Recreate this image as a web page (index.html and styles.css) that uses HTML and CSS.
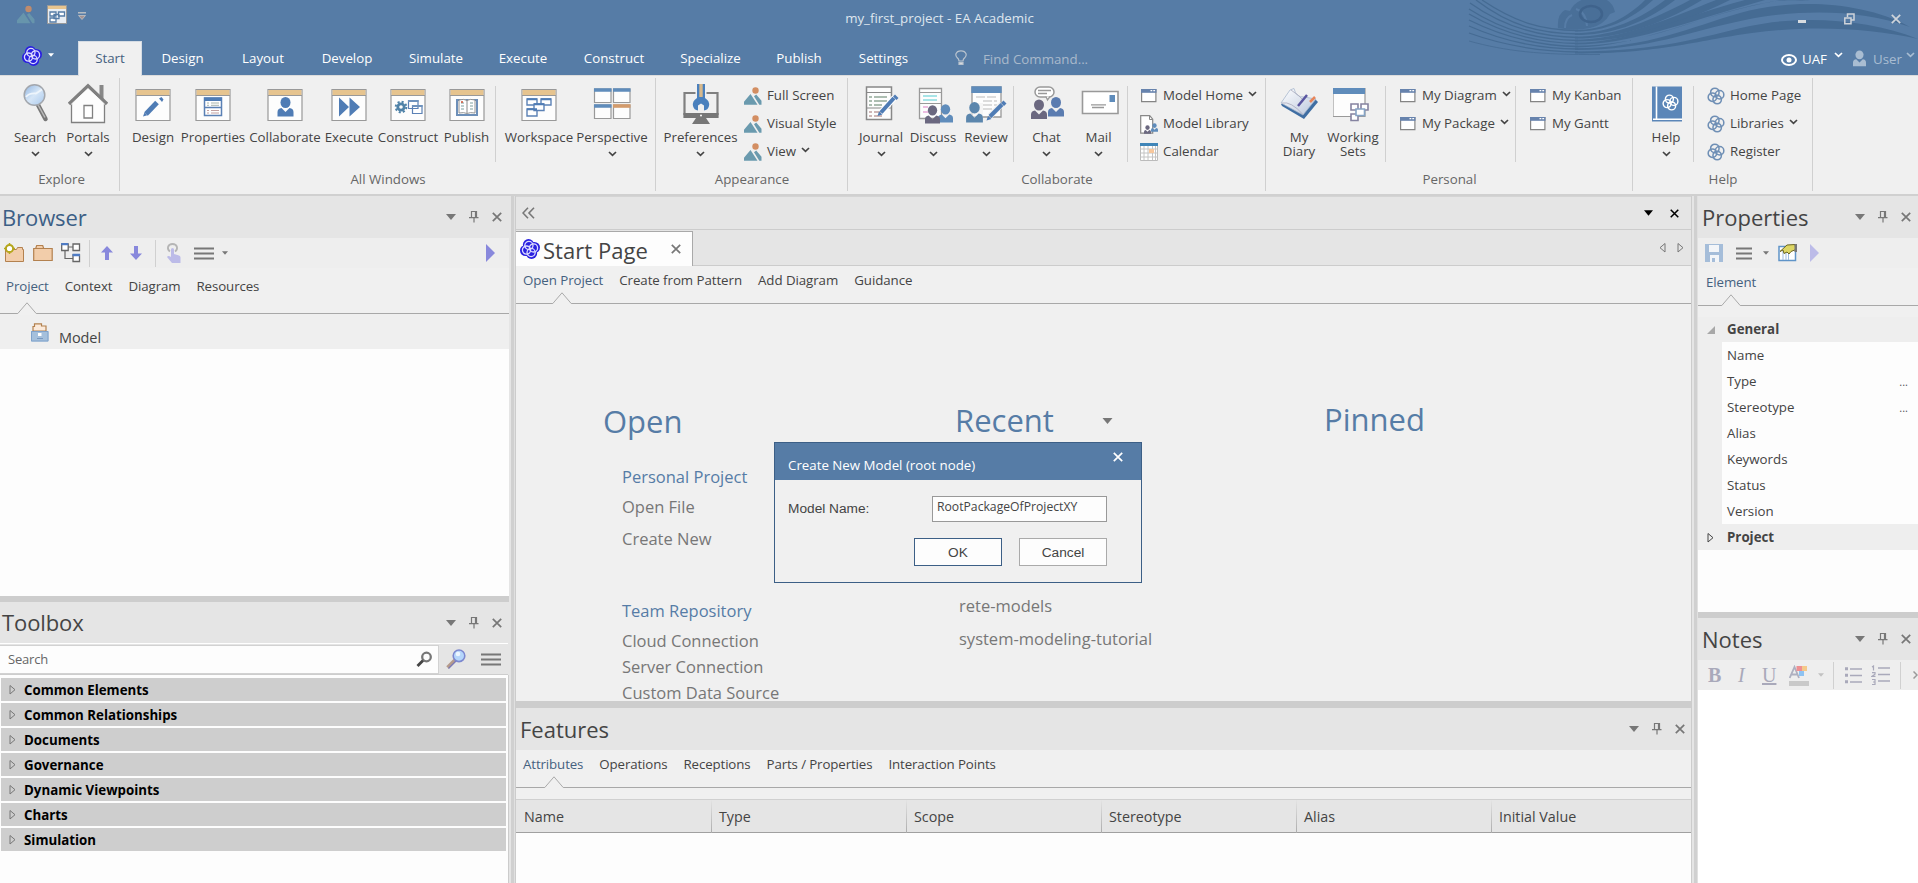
FILE: index.html
```html
<!DOCTYPE html>
<html lang="en">
<head>
<meta charset="utf-8">
<title>my_first_project - EA Academic</title>
<link rel="stylesheet" href="styles.css">
</head>
<body>
<svg class="defs" width="0" height="0">
  <defs>
    <linearGradient id="glass" x1="0" y1="0" x2="1" y2="1"><stop offset="0" stop-color="#8fb4e0"/><stop offset=".5" stop-color="#d6e6f7"/><stop offset="1" stop-color="#a8c8ec"/></linearGradient>
    <linearGradient id="page" x1="0" y1="0" x2="1" y2="1"><stop offset="0" stop-color="#ffffff"/><stop offset="1" stop-color="#b9c6dc"/></linearGradient>
  </defs>
  <symbol id="chev" viewBox="0 0 9 6"><path d="M1 1l3.5 3.3L8 1" fill="none" stroke="currentColor" stroke-width="1.7"/></symbol>
  <symbol id="down" viewBox="0 0 10 6"><path d="M0 0h10L5 6z" fill="currentColor"/></symbol>
  <symbol id="pin" viewBox="0 0 10 12"><path d="M2.5 .5h5v6h-5zM6.5 1v5M0 6.7h9.5M5 7v4.500" fill="none" stroke="currentColor" stroke-width="1.2"/></symbol>
  <symbol id="cross" viewBox="0 0 10 10"><path d="M.8.8l8.400 8.400M9.200.8L.8 9.200" fill="none" stroke="currentColor" stroke-width="1.700"/></symbol>
  <symbol id="knot" viewBox="0 0 20 20"><g fill="none" stroke="currentColor" stroke-width="1.700"><circle cx="8.700" cy="6" r="4.700"/><circle cx="14" cy="8.700" r="4.700"/><circle cx="11.300" cy="14" r="4.700"/><circle cx="6" cy="11.300" r="4.700"/></g></symbol>
  <symbol id="logo" viewBox="0 0 20 20"><g fill="#2a20e0"><circle cx="8.500" cy="5.600" r="5.600"/><circle cx="14.400" cy="8.500" r="5.600"/><circle cx="11.500" cy="14.400" r="5.600"/><circle cx="5.600" cy="11.500" r="5.600"/></g><g fill="none" stroke="#dcdcff" stroke-width="1.300"><circle cx="8.900" cy="6.500" r="4.100"/><circle cx="13.500" cy="8.900" r="4.100"/><circle cx="11.100" cy="13.500" r="4.100"/><circle cx="6.500" cy="11.100" r="4.100"/></g></symbol>
  <symbol id="win" viewBox="0 0 40 40"><path d="M3 6.500h34v31H3z" fill="#fdfdfd" stroke="#999" stroke-width="1.200"/><path d="M3.600 7h32.800v5H3.600z" fill="#e6c48f"/><path d="M3 12.500h34" stroke="#999"/></symbol>
  <symbol id="pic" viewBox="0 0 18 18"><circle cx="11.500" cy="3.500" r="3.200" fill="#d38e62"/><path d="M0 17.800v-3L6.500 7l7 10.800zM10 9.200l2.200-1.700 5.300 6.300v4h-2.200z" fill="#6a9aae"/></symbol>
  <symbol id="small" viewBox="0 0 18 18"><path d="M1.600 2.600h14.300v12H1.600z" fill="#fff" stroke="#858585" stroke-width="1.200"/><path d="M1 2h15.500v3.800H1z" fill="#6783ad"/><path d="M10.500 3.600h1.800M13.300 3.600h1.800" stroke="#fff" stroke-width="1.300"/></symbol>
  <symbol id="man" viewBox="0 0 16 20"><ellipse cx="8" cy="5.500" rx="5" ry="5.500" fill="currentColor"/><path d="M0 19.500v-4.500q0-3.500 4-4l4 4 4-4q4 .5 4 4v4.500z" fill="currentColor"/></symbol>
  <symbol id="tri" viewBox="0 0 8 12"><path d="M1 1.500v8.500L6 5.700z" fill="none" stroke="currentColor"/></symbol>
  <symbol id="menu" viewBox="0 0 20 13"><path d="M0 1.500h20M0 6.500h20M0 11.500h20" stroke="#777" stroke-width="2.200"/></symbol>
  <symbol id="play" viewBox="0 0 9 18"><path d="M0 0v18L9 9z" fill="currentColor"/></symbol>
  <symbol id="notch" viewBox="0 0 20 13"><path d="M0 11.500h.5L10 .8l9.500 10.700h.5V13H0z" fill="#f0f0f0"/><path d="M0 11.500h.8L10 .8l9.200 10.700h.8" fill="none" stroke="#aaa"/></symbol>
</svg>

<header class="top">
  <svg class="waves" width="450" height="60" viewBox="1468 0 450 60">
    <g fill="none" stroke="#456b93" stroke-width="1.300">
      <path d="M1482 0C1515 22 1540 30 1578 30.500"/>
      <path d="M1476 0C1510 26 1540 33.500 1578 34"/>
      <path d="M1470 3C1505 28 1540 37 1578 37.500"/>
      <path d="M1469 9C1505 32 1540 40 1578 40.500"/>
      <path d="M1469 14C1505 35 1540 43 1578 43.500"/>
      <path d="M1469 20C1505 38 1540 46 1578 46.500"/>
      <path d="M1469 26C1505 42 1540 49 1578 49"/>
      <path d="M1469 33C1505 46 1540 51.500 1578 52"/>
      <path d="M1469 41C1505 51 1540 55 1600 54.500" stroke-width=".8"/>
    </g>
    <g fill="#456b93">
      <path d="M1575 30C1605 30 1628 17 1645 0h8C1630 21 1605 31.500 1575 31.500z"/>
      <path d="M1575 33.300C1610 33.300 1642 18 1665 0h10C1642 25 1610 35 1575 35z"/>
      <path d="M1575 36.800C1615 36.800 1656 18 1690 0h12C1656 28 1615 38.500 1575 38.500z"/>
      <path d="M1575 39.800C1620 39.800 1668 19 1716 0h14C1668 30 1620 41.500 1575 41.500z"/>
      <path d="M1575 42.800C1630 42.800 1680 17 1745 0h20C1680 24 1630 44.500 1575 44.500z"/>
      <path d="M1575 45.800C1640 45.800 1688 22 1738 9S1790 2 1810 0h-28C1700 14 1640 47.500 1575 47.500z"/>
      <path d="M1575 48.300C1650 48 1690 27 1740 13S1860 0 1910 27C1860 9 1800 9 1745 20S1650 50 1575 50z"/>
      <path d="M1575 51.500C1660 51.500 1700 37 1750 26S1870 19 1918 39C1870 28 1810 25 1752 33S1660 53.500 1575 53.500z"/>
    </g>
    <path d="M1558 28q-1-14 7-18l5 1Q1576-2 1596-3q16 1 19 15l-5 2q-6 11-20 14-16 3-32 0z" fill="#496f98"/>
    <g fill="none" stroke="#567ca6" stroke-width="2"><path d="M1565 28q0-10 7-13M1576 9q10 3 11 17"/></g>
    <ellipse cx="1591" cy="14" rx="11" ry="8" fill="none" stroke="#3f638c" stroke-width="2.500"/>
  </svg>
  <div class="titlebar">
    <div class="quick">
      <svg class="q-pic" width="18" height="19"><use href="#pic"/></svg>
      <svg class="q-win" width="21" height="20" viewBox="0 0 21 20"><path d="M.5.5h19v18H.5z" fill="#e8edf3" stroke="#999"/><path d="M1 1h18v3H1z" fill="#e6c48f"/><g fill="#fff" stroke="#567ca6" stroke-width="1.300"><path d="M3 7h6v4H3zM11.500 7h6v4h-6zM3 13h6v4H3zM7 9.500h5v4H7z"/></g></svg>
      <svg class="q-more" width="8" height="9" viewBox="0 0 8 9"><path d="M0 .8h8" stroke="#c8c8c8" stroke-width="1.300"/><path d="M.5 3.500h7L4 7.500z" fill="#a49494" stroke="#ccc" stroke-width=".7"/></svg>
    </div>
    <div class="title">my_first_project - EA Academic</div>
    <div class="winbtns">
      <svg width="8" height="3"><path d="M0 1.500h8" stroke="#d8dce0" stroke-width="3"/></svg>
      <svg width="11" height="12" viewBox="0 0 11 12" fill="none" stroke="#cfd4da" stroke-width="1.500"><path d="M3.500 4V1h6.500v6H7M.8 5h6.200v5.800H.8z"/></svg>
      <svg class="light" width="10" height="10"><use href="#cross"/></svg>
    </div>
  </div>
  <nav class="tabrow">
    <div class="appbtn"><svg width="20" height="20"><use href="#logo"/></svg><svg width="6" height="4" class="light"><use href="#down"/></svg></div>
    <span class="rtab on">Start</span><span class="rtab">Design</span><span class="rtab">Layout</span><span class="rtab">Develop</span><span class="rtab">Simulate</span><span class="rtab">Execute</span><span class="rtab">Construct</span><span class="rtab">Specialize</span><span class="rtab">Publish</span><span class="rtab">Settings</span>
    <div class="find"><svg width="12" height="16" viewBox="0 0 12 16" fill="none" stroke="#b9c3ce" stroke-width="1.200"><path d="M4 11q0-2-2-3.500-1.600-2-1-3.700Q2 .8 6 .8t5 3q.6 1.700-1 3.700Q8 9 8 11z"/><path d="M4 12.500h4v2H4z" fill="#d5d9de"/></svg><span>Find Command...</span></div>
    <div class="user">
      <svg width="16" height="12" viewBox="0 0 16 12"><ellipse cx="8" cy="6" rx="7" ry="5" fill="none" stroke="#fff" stroke-width="2"/><circle cx="8" cy="6" r="2.500" fill="#fff"/></svg>
      <span>UAF</span><svg class="up" width="9" height="6"><use href="#chev"/></svg>
      <svg class="man" width="13" height="17"><use href="#man"/></svg><span class="dim">User</span><svg class="up dim" width="9" height="6"><use href="#chev"/></svg>
    </div>
  </nav>
</header>

<section class="ribbon">
  <div class="group g-explore">
    <div class="cells">
      <div class="big"><svg width="40" height="40"><path d="M22 21l8.500 16" stroke="#777" stroke-width="4.500" stroke-linecap="round"/><path d="M22 21l8 14.500" stroke="#bbb" stroke-width="1.500"/><circle cx="19.500" cy="13" r="10.300" fill="url(#glass)" stroke="#a3a7ad" stroke-width="1.500"/><path d="M11 15q3-4 10-3.500l6-4" stroke="#eef5fc" stroke-width="1.800" fill="none"/></svg><b>Search</b><svg class="ch" width="9" height="6"><use href="#chev"/></svg></div>
      <div class="big"><svg width="40" height="42"><path d="M31.500 3h4v17l-4-4z" fill="#888"/><path d="M3.500 20v20.500h33V20L20 5z" fill="#fdfdfd" stroke="#808080" stroke-width="1.300"/><path d="M1 22L20 4l19 18" fill="none" stroke="#808080" stroke-width="3.500"/><path d="M3 22.500L20 6.500l17 16" fill="none" stroke="#fff" stroke-width=".8"/><path d="M16 23.500h8.500v12.500H16z" fill="#fff" stroke="#808080" stroke-width="1.300"/></svg><b>Portals</b><svg class="ch" width="9" height="6"><use href="#chev"/></svg></div>
    </div><div class="gname">Explore</div>
  </div>
  <div class="group g-windows">
    <div class="cells">
      <div class="big"><svg width="40" height="40"><use href="#win"/><path d="M13 32L24 20.500" stroke="#4f7cb5" stroke-width="5"/><path d="M10 34.500l1.500-4 2.800 2.700zM26 16.500l2.500-1.500 2 2.500-1.500 2.500z" fill="#4f7cb5"/></svg><b>Design</b></div>
      <div class="big"><svg width="40" height="40"><use href="#win"/><path d="M11.500 16h17v17.500h-17zM11.500 25.500h17" fill="#fff" stroke="#5b81b5" stroke-width="1.500"/><path d="M11 15.500h18v3.500H11z" fill="#4f7cb5"/><path d="M14 21h2M18 21h8M14 23.300h2M18 23.300h8" stroke="#a9b5ac"/><path d="M14 28.500h2M18 28.500h8M14 31h2M18 31h8" stroke="#c3a0a0"/></svg><b>Properties</b></div>
      <div class="big"><svg width="40" height="40"><use href="#win"/><svg x="12" y="15" width="17" height="20" color="#4f7cb5"><use href="#man"/></svg></svg><b>Collaborate</b></div>
      <div class="big"><svg width="40" height="40"><use href="#win"/><path d="M10 15.500v19L20 25zM20.500 15.500v19L31 25z" fill="#4f7cb5"/></svg><b>Execute</b></div>
      <div class="big"><svg width="40" height="40"><use href="#win"/><circle cx="13" cy="25" r="3.200" fill="none" stroke="#4f82a8" stroke-width="2.800"/><circle cx="13" cy="25" r="5.300" fill="none" stroke="#4f82a8" stroke-width="2" stroke-dasharray="2.080 2.080"/><path d="M20.500 18.500h9.500v8h-9.500zM24.500 23.500h9.500v8h-9.500z" fill="#fff" stroke="#5b81b5" stroke-width="1.200"/><path d="M20 18h10.500v2H20zM24 23h10.500v2H24z" fill="#6f93bd"/></svg><b>Construct</b></div>
      <div class="big"><svg width="40" height="40"><use href="#win"/><path d="M10 18h20v15H10z" fill="#fff" stroke="#6d8fb8" stroke-width="2"/><path d="M12 18q5-1.500 8 .5 3-2 8-.5v13q-5-1-8 .5-3-1.500-8-.5z" fill="#fff" stroke="#888" stroke-width=".9"/><path d="M20 18v13" stroke="#888"/><path d="M14 21h3M14 24h3M14 27h3M23 21h3M23 24h3M23 27h3" stroke="#7fa0a0" stroke-width="1.200"/><path d="M14 20h2" stroke="#d05030" stroke-width="1.500"/></svg><b>Publish</b></div>
      <i class="vr"></i>
      <div class="big"><svg width="40" height="40"><use href="#win"/><g fill="#fff" stroke="#5b81b5" stroke-width="1.400"><path d="M8 17h10v6H8zM22 17h10v6H22zM8 27h10v7H8z"/><path d="M15 22h10v6.500H15z"/></g><path d="M8 17.200h10M22 17.200h10M8 27.200h10M15 22.200h10" stroke="#4f7cb5" stroke-width="2"/></svg><b>Workspace</b></div>
      <div class="big"><svg width="40" height="40"><g fill="#fdfdfd" stroke="#999" stroke-width="1.200"><path d="M2.500 7h16.500v13.500H2.500zM21.500 7H38v13.500H21.500zM2.500 23h16.500v13.500H2.500zM21.500 23H38v13.500H21.500z"/></g><path d="M2 6.200h17.500v3.600H2zM21 6.200h17.500v3.600H21zM2 22.200h17.500v3.600H2z" fill="#5f8cbb"/><path d="M21 22.200h17.500v3.600H21z" fill="#d39b6c"/></svg><b>Perspective</b><svg class="ch" width="9" height="6"><use href="#chev"/></svg></div>
    </div><div class="gname">All Windows</div>
  </div>
  <div class="group g-appear">
    <div class="cells">
      <div class="big"><svg width="40" height="42"><path d="M3.500 11h33v21h-33z" fill="#f0f0f0" stroke="#808080" stroke-width="2.200"/><path d="M2.400 31h35.200v5H2.400z" fill="#777"/><path d="M15 36h10l4 6H11z" fill="#777"/><circle cx="20" cy="33.500" r="1" fill="#fff"/><path d="M14.500 2h11v12h-11z" fill="#f0f0f0"/><path d="M16 2h8v14q5 3 4 8-1 4-5 4.500v-5l-3-2-3 2v5q-4-.5-5-4.500-1-5 4-8z" fill="#4a80bd"/><path d="M18.300 2h3.400v13h-3.400z" fill="#d8b98c"/></svg><b>Preferences</b><svg class="ch" width="9" height="6"><use href="#chev"/></svg></div>
      <ul class="list"><li><svg width="18" height="18"><use href="#pic"/></svg>Full Screen</li><li><svg width="18" height="18"><use href="#pic"/></svg>Visual Style</li><li><svg width="18" height="18"><use href="#pic"/></svg>View<svg class="lc" width="9" height="6"><use href="#chev"/></svg></li></ul>
    </div><div class="gname">Appearance</div>
  </div>
  <div class="group g-collab">
    <div class="cells">
      <div class="big"><svg width="40" height="40"><path d="M5.500 5h25v32.500h-25z" fill="#fdfdfd" stroke="#888" stroke-width="1.500"/><path d="M5.500 10.500h25M5.500 26h25" stroke="#888"/><path d="M8 15h3M13 15h13M8 19h3M13 19h13M8 23h3M13 23h8" stroke="#91a898" stroke-width="1.300"/><path d="M8 30h3M13 30h8M8 34h3M13 34h8" stroke="#c0a0a0" stroke-width="1.300"/><path d="M20 30.500L33.500 15.500" stroke="#fff" stroke-width="6"/><path d="M20 30.500L33 16" stroke="#4f7cb5" stroke-width="4"/><path d="M16.500 34l1.500-4.500 3.500 3zM32 14.500l2-2 3.500 3.500-2 2z" fill="#4f7cb5"/></svg><b>Journal</b><svg class="ch" width="9" height="6"><use href="#chev"/></svg></div>
      <div class="big"><svg width="42" height="42"><path d="M7.500 6.500h22v30h-22z" fill="#fdfdfd" stroke="#999" stroke-width="1.300"/><path d="M7.500 10.500h22M7.500 21.500h22" stroke="#999"/><path d="M11 14h14M11 18h14" stroke="#8adbe0" stroke-width="1.500"/><path d="M11 25h5M11 30h5" stroke="#e6a8d8" stroke-width="1.500"/><svg x="26" y="22" width="15" height="19" color="#5f8cbb"><use href="#man"/></svg><svg x="13" y="23" width="15" height="19" color="#6b6880"><use href="#man"/></svg></svg><b>Discuss</b><svg class="ch" width="9" height="6"><use href="#chev"/></svg></div>
      <div class="big"><svg width="42" height="42"><path d="M7 5h29v30H7z" fill="#fdfdfd" stroke="#999" stroke-width="1.300"/><path d="M6.300 4.300h30.400V11H6.300z" fill="#5f8cbb"/><path d="M11 15h21M18 19h14M18 23h14M18 27h10" stroke="#bbb" stroke-dasharray="9 2"/><path d="M0 21h18v20H0z" fill="#f0f0f0" opacity=".6"/><svg x="1" y="20" width="17" height="21" color="#5b86ad"><use href="#man"/></svg><path d="M25 34l12-12" stroke="#f0f0f0" stroke-width="6"/><path d="M25 34.500L37 22.500" stroke="#4f7cb5" stroke-width="4"/><path d="M21.500 38.500l1.500-4.500 3.500 3zM36 21l2.500-2.500 3 3L39 24z" fill="#4f7cb5"/></svg><b>Review</b><svg class="ch" width="9" height="6"><use href="#chev"/></svg></div>
      <i class="vr"></i>
      <div class="big"><svg width="40" height="40"><rect x="8" y="5" width="19" height="10" rx="5" fill="#fff" stroke="#999" stroke-width="1.500"/><path d="M19 14.500l1.500 3.500 2.500-3.500" fill="#fff" stroke="#999" stroke-width="1.300"/><path d="M11 8.500h13M11 11.500h9" stroke="#999" stroke-width="1.300"/><svg x="4" y="17" width="16" height="21" color="#6b6880"><use href="#man"/></svg><svg x="21" y="14" width="16" height="22" color="#5b7cb0"><use href="#man"/></svg></svg><b>Chat</b><svg class="ch" width="9" height="6"><use href="#chev"/></svg></div>
      <div class="big"><svg width="40" height="40"><path d="M3.500 9.500H39v22H3.500z" fill="#fff" stroke="#999" stroke-width="1.600"/><path d="M30.500 13h5.500v7h-5.500z" fill="#5f8cbb"/><path d="M12 22.800h15M13 25.500h12" stroke="#999" stroke-width="1.300"/></svg><b>Mail</b><svg class="ch" width="9" height="6"><use href="#chev"/></svg></div>
      <i class="vr"></i>
      <ul class="list"><li><svg width="18" height="18"><use href="#small"/></svg>Model Home<svg class="lc" width="9" height="6"><use href="#chev"/></svg></li>
      <li><svg width="18" height="19" viewBox="0 0 18 19"><path d="M.7.700h9l3 3.500v14H.7z" fill="#fff" stroke="#888" stroke-width="1.200"/><path d="M9.500.5v4h3.500" fill="none" stroke="#888"/><svg x="11" y="8" width="7" height="9" color="#5f8cbb"><use href="#man"/></svg><svg x="4" y="10" width="7" height="9" color="#6b6880"><use href="#man"/></svg></svg>Model Library</li>
      <li><svg width="18" height="18" viewBox="0 0 18 18"><path d="M.5 1h17v16.500H.5z" fill="#fff" stroke="#bbb"/><path d="M.5 6h17M.5 10h17M.5 14h17M4 3v14M8 3v14M12.500 3v14M15.500 3v14" stroke="#c4c4c4"/><path d="M0 0h18v3H0z" fill="#3f85b8"/><path d="M9 6h5v4H9z" fill="#f7c79c"/></svg>Calendar</li></ul>
    </div><div class="gname">Collaborate</div>
  </div>
  <div class="group g-personal">
    <div class="cells">
      <div class="big two"><svg width="40" height="40"><path d="M3 24l22 13 14-17-3-3-34 5z" fill="#3f6ea3"/><path d="M2 21l9-13 4-1.500q2 9 10 8.500l12 2-13 16z" fill="url(#page)" stroke="#9fb0c8" stroke-width=".7"/><path d="M3 21q9-2 21 11.500M12 8q9 6 12 10" fill="none" stroke="#aab" stroke-width=".8"/><path d="M19 24l9-11" stroke="#5a56a0" stroke-width="2.500"/><path d="M31 20l5-5" stroke="#e8865a" stroke-width="2.500"/></svg><b>My<br>Diary</b></div>
      <div class="big two"><svg width="40" height="40"><path d="M-1 6.500h32v28H-1z" transform="translate(1)" fill="#fdfdfd" stroke="#999" stroke-width="1.200"/><path d="M0 6h32v6H0z" fill="#5f8cbb"/><g fill="#fff" stroke="#8583a0" stroke-width="1.600"><path d="M18 22h7v6h-7zM28 22h7v6h-7zM18 32h7v6.500h-7z"/><path d="M23 27h8.500v6.500H23z" stroke="#86a4c5"/></g></svg><b>Working<br>Sets</b></div>
      <i class="vr"></i>
      <ul class="list"><li><svg width="18" height="18"><use href="#small"/></svg>My Diagram<svg class="lc" width="9" height="6"><use href="#chev"/></svg></li><li><svg width="18" height="18"><use href="#small"/></svg>My Package<svg class="lc" width="9" height="6"><use href="#chev"/></svg></li></ul>
      <i class="vr"></i>
      <ul class="list"><li><svg width="18" height="18"><use href="#small"/></svg>My Kanban</li><li><svg width="18" height="18"><use href="#small"/></svg>My Gantt</li></ul>
    </div><div class="gname">Personal</div>
  </div>
  <div class="group g-help">
    <div class="cells">
      <div class="big"><svg width="40" height="40"><path d="M6 4.500h30v35H6z" fill="#5b86b8"/><path d="M10.500 4.500v32.500M7 37.200h29" stroke="#fff" stroke-width="1.600"/><svg x="16" y="12" width="17" height="17" color="#fff"><use href="#knot"/></svg></svg><b>Help</b><svg class="ch" width="9" height="6"><use href="#chev"/></svg></div>
      <i class="vr"></i>
      <ul class="list knots"><li><svg width="18" height="18"><use href="#knot"/></svg>Home Page</li><li><svg width="18" height="18"><use href="#knot"/></svg>Libraries<svg class="lc" width="9" height="6"><use href="#chev"/></svg></li><li><svg width="18" height="18"><use href="#knot"/></svg>Register</li></ul>
    </div><div class="gname">Help</div>
  </div>
</section>

<main class="work">
  <aside class="left">
    <div class="phead blue"><h2>Browser</h2><svg width="10" height="6"><use href="#down"/></svg><svg width="10" height="12"><use href="#pin"/></svg><svg width="10" height="10"><use href="#cross"/></svg></div>
    <div class="tools t-browser">
      <svg width="21" height="20" viewBox="0 0 21 20"><path d="M1.500 6.500h11l1-2h5v2h1v12h-18z" fill="#f2cdaa" stroke="#b3814f"/><circle cx="5.500" cy="5.500" r="3.600" fill="#fff" stroke="#b5a61c" stroke-width="2"/><path d="M5.500 0v2M5.500 9v2M0 5.500h2M9 5.500h2" stroke="#b5a61c" stroke-width="1.500"/></svg>
      <svg width="20" height="18" viewBox="0 0 20 18"><path d="M.7 16.500v-12h2l1-3h6l1 3h8.500v12z" fill="#f2cdaa" stroke="#b3814f" stroke-width="1.200"/><path d="M3 4.500h8" stroke="#b3814f"/></svg>
      <svg width="20" height="20" viewBox="0 0 20 20" fill="#fff" stroke="#666"><path d="M4 7v8.500h8M7 4h5" fill="none" stroke-width="1.200"/><path d="M.7 1h6.500v6.500H.7zM12 1h6.500v6.500H12zM12 12h6.500v6.500H12z" stroke-width="1.300"/><path d="M.2 1h7M11.500 12h7.500" stroke="#4f7cc5" stroke-width="2.500"/></svg>
      <i class="sep"></i>
      <svg width="12" height="14" viewBox="0 0 12 14"><path d="M6 0l6 6.500H8V14H4V6.500H0z" fill="#8888dc"/></svg>
      <svg width="12" height="14" viewBox="0 0 12 14"><path d="M6 14l6-6.500H8V0H4v7.500H0z" fill="#8888dc"/></svg>
      <i class="sep"></i>
      <svg width="15" height="20" viewBox="0 0 15 20"><path d="M5 9V6.500q0-1.500 1.500-1.500T8 6.500V11l5 1.500q1.500.5 1.500 2V20H6L1 14q1-2 4 0z" fill="#bcbbe8"/><path d="M4 8.500Q1.500 7 2 4q1-3 4.500-3T11 4q.5 3-2 4.500" fill="none" stroke="#b5b5b5" stroke-width="1.800"/></svg>
      <svg width="20" height="13"><use href="#menu"/></svg>
      <svg class="gray" width="6" height="4"><use href="#down"/></svg>
      <svg class="go" width="9" height="18"><use href="#play"/></svg>
    </div>
    <div class="ptabs"><span class="on">Project</span><span>Context</span><span>Diagram</span><span>Resources</span><svg class="notch n1" width="20" height="13"><use href="#notch"/></svg></div>
    <div class="model"><svg width="18" height="19" viewBox="0 0 18 19"><path d="M2 8V3.500h1.500V.8h7V3h4.500v5z" fill="#fbeadb" stroke="#b3814f" stroke-width="1.200"/><path d="M0 8h17.500v10.500H0z" fill="#a5c0dc"/><path d="M.5 8.500h16.500v9.500H.5z" fill="none" stroke="#7fa2cb"/><path d="M7 10h3.500v3H7z" fill="#fff"/><path d="M6 15.500h6" stroke="#7898c0"/></svg><span>Model</span></div>
    <div class="tree"></div>
    <div class="hsplit"></div>
    <div class="phead tb"><h2>Toolbox</h2><svg width="10" height="6"><use href="#down"/></svg><svg width="10" height="12"><use href="#pin"/></svg><svg width="10" height="10"><use href="#cross"/></svg></div>
    <div class="search">
      <div class="sbox"><span>Search</span><svg width="17" height="17" viewBox="0 0 17 17"><circle cx="10.500" cy="6" r="4.300" fill="none" stroke="#777" stroke-width="2.300"/><path d="M7 9.500L1.500 15" stroke="#444" stroke-width="2.800"/></svg></div>
      <svg width="20" height="20" viewBox="0 0 20 20"><path d="M9 11l-7.500 7.500" stroke="#b59b8c" stroke-width="3.500"/><path d="M10 12l-7.500 7.500" stroke="#7a78b8" stroke-width="1.200"/><circle cx="13" cy="6.800" r="5.800" fill="#b5d6fb" stroke="#7c88cf" stroke-width="1.600"/><circle cx="12" cy="5" r="2.300" fill="#ecf6ff"/></svg>
      <svg width="20" height="13"><use href="#menu"/></svg>
    </div>
    <div class="rows">
      <div><svg width="8" height="12"><use href="#tri"/></svg>Common Elements</div><div><svg width="8" height="12"><use href="#tri"/></svg>Common Relationships</div><div><svg width="8" height="12"><use href="#tri"/></svg>Documents</div><div><svg width="8" height="12"><use href="#tri"/></svg>Governance</div><div><svg width="8" height="12"><use href="#tri"/></svg>Dynamic Viewpoints</div><div><svg width="8" height="12"><use href="#tri"/></svg>Charts</div><div><svg width="8" height="12"><use href="#tri"/></svg>Simulation</div>
    </div>
  </aside>
  <div class="vsplit"></div>
  <section class="center">
    <div class="strip"><svg width="13" height="12" viewBox="0 0 13 12"><path d="M6 .8L1 6l5 5.200M12 .8L7 6l5 5.200" fill="none" stroke="#777" stroke-width="1.600"/></svg><svg class="r" width="9" height="6"><use href="#down"/></svg><svg width="9" height="9"><use href="#cross"/></svg></div>
    <div class="doctabs"><div class="doctab"><svg width="20" height="20"><use href="#logo"/></svg><span>Start Page</span><svg class="x" width="10" height="10"><use href="#cross"/></svg></div><div class="arrows"><svg class="flip" width="8" height="12"><use href="#tri"/></svg><svg width="8" height="12"><use href="#tri"/></svg></div></div>
    <div class="ptabs c"><span class="on">Open Project</span><span>Create from Pattern</span><span>Add Diagram</span><span>Guidance</span><svg class="notch n2" width="20" height="13"><use href="#notch"/></svg></div>
    <div class="start">
      <div class="col c-open"><h1>Open</h1>
        <h3>Personal Project</h3><p>Open File</p><p class="lower">Create New</p>
        <h3 class="team">Team Repository</h3><p>Cloud Connection</p><p class="tight">Server Connection</p><p class="tight">Custom Data Source</p>
      </div>
      <div class="col c-recent"><div class="rhead"><h1>Recent</h1><svg width="11" height="6"><use href="#down"/></svg></div><p class="rec">rete-models</p><p>system-modeling-tutorial</p></div>
      <div class="col c-pinned"><h1>Pinned</h1></div>
    </div>
    <div class="hsplit c"></div>
    <div class="phead fe"><h2>Features</h2><svg width="10" height="6"><use href="#down"/></svg><svg width="10" height="12"><use href="#pin"/></svg><svg width="10" height="10"><use href="#cross"/></svg></div>
    <div class="ptabs f"><span class="on">Attributes</span><span>Operations</span><span>Receptions</span><span>Parts / Properties</span><span>Interaction Points</span><svg class="notch n3" width="20" height="13"><use href="#notch"/></svg></div>
    <div class="thead"><span>Name</span><span>Type</span><span>Scope</span><span>Stereotype</span><span>Alias</span><span>Initial Value</span></div>
    <div class="tbody"></div>
  </section>
  <div class="vsplit"></div>
  <aside class="right">
    <div class="phead"><h2>Properties</h2><svg width="10" height="6"><use href="#down"/></svg><svg width="10" height="12"><use href="#pin"/></svg><svg width="10" height="10"><use href="#cross"/></svg></div>
    <div class="tools t-props">
      <svg width="18" height="18" viewBox="0 0 18 18"><path d="M0 0h18v18H0z" fill="#a5bdd9"/><path d="M4 1h10v7H4zM5 11h9v7H5z" fill="#f3f5f8"/><path d="M7 14h3v4H7z" fill="#a5bdd9"/></svg>
      <svg width="16" height="13" viewBox="0 0 16 13"><path d="M0 1.500h16M0 6.500h16M0 11.500h16" stroke="#777" stroke-width="2.200"/></svg>
      <svg class="gray" width="6" height="4"><use href="#down"/></svg>
      <svg width="20" height="18" viewBox="0 0 20 18"><path d="M1 2.500h16.500v14H1z" fill="#fff" stroke="#5f94c8" stroke-width="1.500"/><path d="M8 7v9M10.500 7v9M5 7v9" stroke="#9dbbe0"/><path d="M2 7.500L9 1l8-.5 1 5-5 2-2 2.500-2-2-3 1.500L5 6z" fill="#ddd663" stroke="#6b6420"/><path d="M16.500 0h2.500v8h-2.500z" fill="#777"/></svg>
      <svg class="lite" width="9" height="18"><use href="#play"/></svg>
    </div>
    <div class="ptabs p"><span class="on">Element</span><svg class="notch n4" width="20" height="13"><use href="#notch"/></svg></div>
    <div class="props">
      <div class="cat"><svg width="8" height="8"><path d="M8 0v8H0z" fill="#a8a8a8"/></svg>General</div>
      <div class="plist"><div>Name</div><div>Type<em>...</em></div><div>Stereotype<em>...</em></div><div>Alias</div><div>Keywords</div><div>Status</div><div>Version</div></div>
      <div class="cat closed"><svg width="8" height="12"><use href="#tri"/></svg>Project</div>
    </div>
    <div class="hsplit"></div>
    <div class="phead"><h2>Notes</h2><svg width="10" height="6"><use href="#down"/></svg><svg width="10" height="12"><use href="#pin"/></svg><svg width="10" height="10"><use href="#cross"/></svg></div>
    <div class="tools t-notes">
      <span class="fmt bold">B</span><span class="fmt ital">I</span><span class="fmt und">U</span>
      <svg width="20" height="21" viewBox="0 0 20 21"><path d="M.7 13L5.500 2 10 13M2.500 9.500h6" fill="none" stroke="#aeb0c0" stroke-width="1.800"/><path d="M7.500 1h5.500v5H7.500z" fill="#ee8f92"/><path d="M13 1h5v5h-5z" fill="#f5c98a"/><path d="M10 6h5v5h-5z" fill="#8fc3f2"/><path d="M0 16h20v5H0z" fill="#c9c9c9"/></svg>
      <svg class="faint" width="6" height="4"><use href="#down"/></svg><i class="sep"></i>
      <svg width="18" height="18" viewBox="0 0 18 18"><path d="M6 3h12M6 9.500h12M6 16h12" stroke="#a9a9ba" stroke-width="1.300"/><path d="M1 1.300h3v3H1zM1 7.800h3v3H1zM1 14.300h3v3H1z" fill="#a9a9ba"/></svg>
      <svg width="19" height="20" viewBox="0 0 19 20"><path d="M7 3h12M7 9.500h12M7 16h12" stroke="#a9a9ba" stroke-width="1.300"/><path d="M1 2l1.500-1v4.500M1 7.700h3v1.600l-3 2h3.500M1 14.500h3v5H1M2 17h2" fill="none" stroke="#a9a9ba" stroke-width="1.200"/></svg>
      <i class="sep"></i><svg class="ov" width="5" height="8" viewBox="0 0 5 8"><path d="M.5.5L4 4 .5 7.500" fill="none" stroke="#999" stroke-width="1.500"/></svg>
    </div>
    <div class="notes"></div>
  </aside>
</main>

<div class="dialog">
  <div class="dhead"><span>Create New Model (root node)</span><svg width="10" height="10"><use href="#cross"/></svg></div>
  <div class="dbody">
    <div class="field"><label>Model Name:</label><div class="input">RootPackageOfProjectXY</div></div>
    <div class="btns"><div class="btn ok">OK</div><div class="btn">Cancel</div></div>
  </div>
</div>
</body>
</html>
```
FILE: styles.css
```css
* { box-sizing: border-box; }
html, body { height: 100%; }
body { margin: 0; width: 1918px; height: 883px; overflow: hidden; display: flex; flex-direction: column; background: #e5e5e5; color: #444; font: 13.3px/1.2 "Open Sans", "Noto Sans", sans-serif; white-space: nowrap; position: relative; }
svg { display: block; flex: none; }
.defs { position: absolute; }
h1, h2, h3, p, ul { margin: 0; padding: 0; font-weight: 400; list-style: none; }

/* title bar and ribbon tabs */
.top { height: 75px; flex: none; background: #567ca6; color: #fff; position: relative; }
.waves { position: absolute; right: 0; top: 0; }
.titlebar { height: 41px; display: grid; grid-template-columns: 400px 1fr 400px; position: relative; }
.quick { display: flex; align-items: flex-start; padding-left: 17px; }
.q-pic { margin-top: 5px; opacity: .85; }
.q-win { margin: 5px 0 0 12px; }
.q-more { margin: 12px 0 0 10px; }
.title { text-align: center; padding: 11px 39px 0 0; color: #dfe6ee; }
.winbtns { display: flex; justify-content: flex-end; align-items: flex-start; padding: 13px 17px 0 0; }
.winbtns svg:first-child { margin: 7px 38px 0 0; }
.winbtns svg:nth-child(2) { margin-right: 36px; }
.winbtns .light { margin-top: 1px; color: #cfd4da; }
.light { color: #fff; }
.tabrow { height: 34px; display: grid; grid-template-columns: 78px 64px 81px 80px 88px 90px 84px 98px 95px 82px 87px 1fr auto; position: relative; }
.appbtn { display: flex; gap: 6px; padding: 5px 0 0 22px; }
.appbtn .light { margin-top: 7px; }
.rtab { text-align: center; padding-top: 10px; }
.rtab.on { background: #f0f0f0; color: #45617f; border: 1px solid #d5dce4; border-bottom: 0; padding-top: 9px; position: relative; height: 35px; z-index: 1; }
.find { display: flex; gap: 16px; padding: 9px 0 0 28px; color: #a9b9cb; }
.find span { padding-top: 2px; }
.user { display: grid; grid-template-columns: 21px 32px 19px 20px 33px 9px; align-items: start; padding: 11px 3px 0 0; }
.user > svg:first-child { margin-top: 2px; }
.user .man { margin-top: -2px; color: #a9bdd2; }
.dim { color: #a9bdd2; }

/* ribbon */
.ribbon { height: 121px; flex: none; display: flex; background: #f0f0f0; border-top: 1px solid #dcdcdc; border-bottom: 2px solid #d0d0d0; }
.group { position: relative; height: 118px; padding-top: 6px; }
.group::after { content: ""; position: absolute; right: 0; top: 2px; width: 1px; height: 113px; background: #d0d0d0; }
.cells { display: grid; height: 88px; }
.g-explore { width: 120px; }
.g-explore .cells { grid-template-columns: 52px 54px; padding-left: 9px; }
.g-explore .gname { padding-left: 3px; }
.g-windows { width: 536px; }
.g-windows .cells { grid-template-columns: 46px 74px 70px 58px 60px 57px 1px 86px 60px; padding-left: 10px; }
.g-appear { width: 192px; }
.g-appear .cells { grid-template-columns: 69px 1fr; padding-left: 10px; }
.g-collab { width: 418px; }
.g-collab .cells { grid-template-columns: 52px 52px 54px 1px 65px 39px 10px 1fr; padding-left: 7px; }
.g-personal { width: 367px; }
.g-personal .cells { grid-template-columns: 46px 62px 2px 129px 1px 1fr; padding-left: 10px; }
.g-help { width: 180px; }
.g-help .cells { grid-template-columns: 40px 8px 1fr; padding-left: 13px; }
.big { display: flex; flex-direction: column; align-items: center; height: 88px; position: relative; }
.big > svg:first-child { height: 42px; }
.big > svg:first-child > use { width: 40px; height: 40px; }
.big b { font-weight: 400; margin-top: 5px; line-height: 16px; text-align: center; }
.big.two b { line-height: 14px; margin-top: 6px; }
.ch { margin-top: 6px; }
.vr { width: 1px; height: 76px; margin-top: 4px; background: #d0d0d0; justify-self: end; }
.list { padding-left: 9px; }
.list li { display: flex; align-items: center; height: 28px; }
.list li > svg:first-child { margin-right: 5px; }
.list .lc { margin: -4px 0 0 5px; }
.g-collab .list { padding-left: 12px; }
.g-personal .list { padding-left: 13px; }
.g-help .list { padding-left: 13px; }
.knots li > svg:first-child { color: #6f8fb5; }
.gname { text-align: center; color: #666; line-height: 18px; }

/* work area */
.work { flex: 1; min-height: 0; display: grid; grid-template-columns: 509px 6px 1177px 6px 220px; }
.vsplit { background: linear-gradient(90deg, #e5e5e5 0 2px, #d0d0d0 2px 5px, #e0e0e0 5px); }
.left, .center, .right { display: flex; flex-direction: column; min-width: 0; min-height: 0; overflow: hidden; }
.phead { height: 42px; flex: none; display: flex; align-items: center; background: #e5e5e5; color: #777; }
.phead h2 { font-size: 22px; color: #444; flex: 1; padding-left: 2px; }
.phead.blue h2 { color: #3c5f86; }
.phead svg { margin-right: 13px; }
.phead svg:last-child { margin-right: 7px; }
.right .phead h2 { padding-left: 4px; }
.left .phead h2 { letter-spacing: -.1px; }
.center .phead h2 { padding-left: 4px; }
.center .phead svg:last-child { margin-right: 6px; }
.tb h2 { letter-spacing: .2px; }
.tools { height: 30px; flex: none; display: flex; align-items: center; background: #eee; }
.sep { width: 1px; height: 27px; background: #d0d0d0; flex: none; }
.gray { color: #777; }
.faint { color: #c2c2c2; }
.go { color: #8888dc; margin-left: auto; }
.lite { color: #bcbbe8; }
.t-browser { padding: 0 14px 0 4px; gap: 8px; }
.t-browser .sep { margin: 0 1px 0 0; }
.t-browser svg:nth-of-type(4) { margin: 0 9px 0 2px; }
.t-browser svg:nth-of-type(5) { margin-right: 5px; }
.t-browser svg:nth-of-type(6) { margin: 0 5px 0 1px; }
.ptabs { flex: none; display: flex; gap: 16px; align-items: flex-start; height: 46px; padding: 11px 0 0 6px; border-bottom: 1px solid #a8a8a8; background: #f0f0f0; position: relative; letter-spacing: -.1px; }
.ptabs .on { color: #45617f; }
.notch { position: absolute; bottom: -2px; }
.n1 { left: 17px; }
.n2 { left: 36px; }
.n3 { left: 28px; }
.n4 { left: 23px; }
.model { height: 35px; flex: none; background: #efefef; display: flex; align-items: center; gap: 10px; padding: 9px 0 0 31px; font-size: 14.500px; letter-spacing: -.1px; }
.model svg { margin-top: -8px; }
.model span { padding-top: 3px; }
.tree { flex: none; height: 247px; background: #fdfdfd; }
.hsplit { height: 6px; flex: none; background: #cdcdcd; }
.tb { height: 41px; }
.search { height: 32px; flex: none; display: flex; align-items: center; gap: 16px; border-top: 1px solid #fff; border-bottom: 1px solid #cdcdcd; margin-right: 1px; }
.search > svg:nth-of-type(1) { margin-left: -9px; margin-right: -1px; }
.sbox { width: 439px; height: 29px; display: flex; justify-content: space-between; align-items: center; background: #fdfdfd; border: 1px solid #d2d2d2; border-left: 0; padding: 0 5px 0 8px; color: #666; font-size: 13px; letter-spacing: -.2px; }
.sbox span { padding-top: 1px; }
.rows { flex: 1; background: #fdfdfd; border-right: 1px solid #ccc; padding: 3px 2px 0 1px; display: flex; flex-direction: column; gap: 2px; color: #000; font-weight: 700; }
.rows div { height: 23px; display: flex; align-items: center; gap: 7px; background: #cecece; padding: 3px 0 0 8px; }
.rows svg { color: #777; margin-top: -2px; }

/* document area */
.center { border-left: 1px solid #ccc; border-right: 1px solid #ccc; }
.strip { height: 34px; flex: none; display: flex; align-items: center; padding: 0 12px 0 6px; border-bottom: 1px solid #ccc; color: #000; border-top: 1px solid #d4d4d4; }
.strip .r { margin: 0 17px 0 auto; }
.doctabs { height: 36px; flex: none; display: flex; justify-content: space-between; border-bottom: 1px solid #ccc; }
.doctab { width: 177px; height: 35px; margin-top: 1px; background: #fdfdfd; border: 1px solid #a9a9a9; border-width: 1px 1px 0 0; display: flex; align-items: center; padding-left: 4px; gap: 3px; font-size: 22px; position: relative; z-index: 1; }
.doctab span { padding-top: 2px; letter-spacing: .05px; width: 106px; }
.doctab .x { margin-left: 19px; color: #777; }
.arrows { display: flex; gap: 11px; align-items: center; padding-right: 6px; color: #777; }
.flip { transform: scaleX(-1); }
.ptabs.c { height: 38px; padding: 7px 0 0 7px; letter-spacing: -.06px; }
.ptabs.f { height: 38px; padding: 7px 0 0 7px; letter-spacing: -.12px; }
.ptabs.p { height: 38px; padding: 7px 0 0 8px; }
.start { height: 397px; flex: none; background: #f0f0f0; display: grid; grid-template-columns: 352px 369px 1fr; padding-left: 87px; color: #777; font-size: 16.500px; overflow: hidden; }
.start h1 { font-size: 31px; line-height: 40px; color: #567ca6; }
.c-open { padding-top: 97px; }
.c-recent { padding-top: 96px; }
.c-pinned { padding-top: 95px; }
.start h3 { color: #567ca6; font-size: 16.500px; line-height: 24px; padding-left: 19px; margin-top: 24px; }
.start p { line-height: 24px; padding-left: 19px; margin-top: 6px; }
.start p.lower { margin-top: 8px; }
.start p.tight { margin-top: 2px; }
.start h3.team { margin-top: 48px; }
.start .c-recent p { padding-left: 4px; margin-top: 9px; }
.start .c-recent p.rec { margin-top: 154px; }
.rhead { display: flex; align-items: center; color: #777; }
.rhead svg { margin: 2px 0 0 48px; }
.hsplit.c { height: 7px; }
.thead { height: 34px; margin-top: 11px; flex: none; display: grid; grid-template-columns: 196px repeat(4, 195px) 1fr; border-top: 1px solid #d0d0d0; border-bottom: 1px solid #a0a0a0; line-height: 33px; font-size: 14.300px; box-shadow: 0 -11px #f0f0f0; }
.thead span { padding-left: 7px; border-right: 1px solid; border-image: linear-gradient(#e5e5e5, #aaa) 1; border-width: 0 1px 0 0; }
.thead span:first-child { padding-left: 8px; }
.thead span:last-child { border: 0; }
.tbody { flex: 1; background: #fdfdfd; }

/* right dock */
.t-props { padding-left: 7px; gap: 11px; }
.t-props svg:nth-child(2) { margin-left: 2px; }
.t-props svg:nth-child(4) { margin-left: -2px; }
.t-props svg:nth-child(5) { margin-left: 1px; }
.props { height: 306px; flex: none; background: #fdfdfd; border-top: 11px solid #f0f0f0; }
.cat { height: 25px; background: #eee; display: flex; align-items: center; gap: 12px; padding-left: 9px; font-weight: 700; }
.cat.closed { height: 26px; padding-top: 2px; }
.plist { border-left: 24px solid #eee; }
.plist div { height: 26px; display: flex; align-items: center; justify-content: space-between; padding: 2px 10px 0 5px; }
.plist em { font-style: normal; font-size: 11px; color: #555; }
.t-notes { padding-left: 10px; position: relative; overflow: hidden; }
.fmt { font: 20px/20px "Liberation Serif", serif; color: #a9a9ba; width: 27px; }
.bold { font-weight: 700; }
.ital { font-style: italic; padding-left: 3px; }
.und { text-decoration: underline; }
.t-notes .faint { margin: 0 9px; }
.t-notes .sep { margin-right: 10px; }
.t-notes svg:nth-of-type(4) { margin: 0 10px 0 9px; }
.t-notes .ov { margin-left: 2px; }
.notes { flex: 1; background: #fff; }

/* dialog */
.dialog { position: absolute; left: 774px; top: 442px; width: 368px; height: 141px; background: #f0f0f0; border: 1px solid #3c5f86; color: #444; }
.dhead { height: 37px; background: #567ca6; color: #fff; display: flex; justify-content: space-between; padding: 15px 18px 0 13px; }
.dhead svg { margin-top: -6px; }
.dbody { padding: 16px 34px 0 13px; }
.field { display: flex; justify-content: space-between; }
.field label { font: 13.700px/26px "Liberation Sans", Arial, sans-serif; }
.input { width: 175px; height: 26px; border: 1px solid #999; background: #fdfdfd; padding-left: 4px; line-height: 20px; font-size: 12.200px; }
.btns { display: flex; justify-content: flex-end; gap: 17px; margin-top: 16px; }
.btn { width: 88px; height: 28px; border: 1px solid #aaa; background: #fdfdfd; text-align: center; font: 13.700px/27px "Liberation Sans", Arial, sans-serif; }
.btn.ok { border-color: #3c5f86; }
```
